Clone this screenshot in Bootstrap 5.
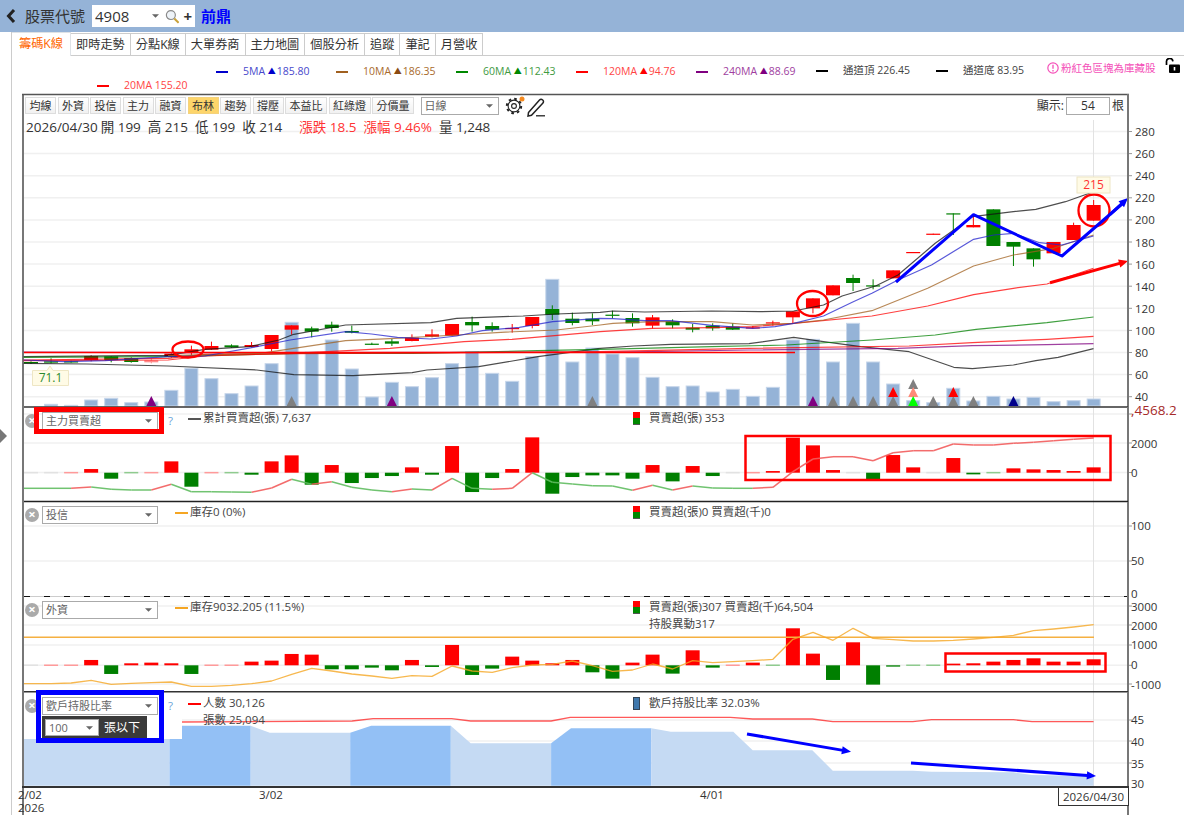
<!DOCTYPE html>
<html lang="zh-Hant">
<head>
    <meta charset="UTF-8">
    <meta name="viewport" content="width=device-width, initial-scale=1.0">
    <title>籌碼K線</title>
    <link href="https://cdn.jsdelivr.net/npm/bootstrap@5.3.0/dist/css/bootstrap.min.css" rel="stylesheet">
    <style>
        html, body {
            height: 815px;
            overflow: hidden;
        }
        body {
            background: #fff;
            color: #333;
            font-family: "Open Sans", "Noto Sans CJK TC", sans-serif;
            font-size: 12px;
            position: relative;
        }
        svg text {
            font-family: "Open Sans", "Noto Sans CJK TC", sans-serif;
        }
        .top-bar {
            height: 32px;
            background: #95b3d7;
            padding-left: 6px;
        }
        .top-label {
            font-size: 15px;
            margin-left: 9px;
            width: 67px;
        }
        .code-box {
            width: 103px;
            height: 22px;
            background: #fff;
            padding-right: 3px;
        }
        .code-box .code-select {
            width: 70px;
            height: 22px;
            border: 0;
            font-size: 15px;
            padding: 0 12px 0 3px;
            background-position: right 2px center;
            color: #333;
        }
        .code-plus {
            font-size: 15px;
            font-weight: 700;
            line-height: 1;
        }
        .stock-name {
            color: #00f;
            font-size: 15px;
            font-weight: 600;
            margin-left: 6px;
        }
        .side-handle {
            position: absolute;
            left: 0;
            top: 429px;
            border-left: 7px solid #777;
            border-top: 7px solid transparent;
            border-bottom: 7px solid transparent;
        }
        .page-body {
            margin-left: 11px;
            height: 783px;
            border-left: 1px solid #ccc;
        }
        .tab-row {
            height: 24px;
            padding-top: 1px;
            border-bottom: 1px solid #ccc;
            --bs-nav-tabs-border-color: #ccc;
            --bs-nav-tabs-border-radius: 0;
            --bs-nav-tabs-border-width: 1px;
        }
        .tab-row .nav-link {
            height: 23px;
            padding: 2px 5px 0;
            font-size: 12.2px;
            line-height: 18px;
            color: #333;
            border: 1px solid #ccc;
            border-left-width: 0;
            border-bottom: 0;
            margin: 0;
            white-space: nowrap;
        }
        .tab-row .nav-link.active {
            height: 24px;
            margin-top: -1px;
            color: #f60;
            padding: 2px 7px 0;
            border-left-width: 0;
        }
        .ma-wrap {
            height: 38px;
            padding-top: 7px;
        }
        .ma-row {
            height: 15px;
            font-size: 10.5px;
            line-height: 15px;
        }
        .ma-first {
            padding-left: 204px;
        }
        .ma-second {
            padding-left: 85px;
        }
        .ma-item {
            width: 120px;
            flex: none;
            white-space: nowrap;
        }
        .ma-up {
            font-size: 8px;
            margin-right: 1px;
            vertical-align: 1px;
        }
        .ma-dash {
            display: inline-block;
            width: 12px;
            height: 2px;
            margin-right: 15px;
            vertical-align: middle;
        }
        .stock-note {
            width: 108px;
            flex: none;
            margin-top: -5px;
            color: #f44fb8;
            white-space: nowrap;
            font-size: 10.5px;
        }
        .lock-icon {
            margin-top: -5px;
            margin-left: 10px;
        }
        .chart-frame {
            margin-left: 10px;
            width: 1107px;
            position: relative;
            box-shadow: inset 2px 0 #777, inset -2px 0 #777;
        }
        .chart-panel {
            position: relative;
        }
        .panel-price { height: 313px; }
        .panel-sub { height: 95px; }
        .panel-svg {
            position: absolute;
            left: 0;
            top: 0;
            overflow: visible;
        }
        .tool-row {
            position: relative;
            padding: 3px 5px 0 3px;
            height: 20px;
            gap: 1.5px;
        }
        .tool-btn {
            height: 17px;
            font-size: 11px;
            line-height: 15px;
            padding: 0 3.5px;
            border: 1px solid #ddd;
            border-radius: 0;
            color: #333;
            background: linear-gradient(#fff, #f1f1f1);
            white-space: nowrap;
            --bs-btn-hover-color: #333;
        }
        .tool-btn.on {
            background: #fdd56b;
            border-color: #f4d27c;
        }
        .pick {
            height: 18px;
            font-size: 11px;
            line-height: 16px;
            padding: 0 14px 0 3px;
            border: 1px solid #aaa;
            border-radius: 0;
            color: #666;
            background-size: 7px 4px;
            background-position: right 5px center;
            background-image: url("data:image/svg+xml,%3csvg xmlns='http://www.w3.org/2000/svg' viewBox='0 0 8 4'%3e%3cpath fill='%23666' d='M0 0h8L4 4z'/%3e%3c/svg%3e");
            box-shadow: none;
        }
        .pick-range {
            width: 78px;
            margin-left: 5px;
            flex: none;
        }
        .tool-gear {
            margin-left: 5px;
            margin-top: -1px;
        }
        .show-count {
            font-size: 12px;
        }
        .count-box {
            width: 44px;
            height: 18px;
            margin: 0 2px 0 2px;
            border: 1px solid #aaa;
            text-align: center;
            font-size: 12px;
            line-height: 16px;
        }
        .info-row {
            position: relative;
            font-size: 13.5px;
            line-height: 18px;
            padding-left: 4px;
            margin-top: 4px;
            white-space: nowrap;
            color: #333;
        }
        .info-row span {
            margin-right: 3px;
        }
        .info-row .up {
            color: #f33;
        }
        .info-row .gap-left {
            margin-left: 14px;
        }
        .panel-head {
            position: relative;
            padding-left: 3px;
            font-size: 11.5px;
            color: #444;
        }
        .head-left {
            width: 608px;
            flex: none;
        }
        .close-dot {
            width: 14px;
            height: 14px;
            border-radius: 50%;
            background: #aaa;
            color: #fff;
            font-size: 13px;
            line-height: 13px;
            font-weight: 700;
            text-align: center;
            margin-top: 2px;
            margin-right: 3px;
            flex: none;
        }
        .pick-panel {
            width: 116px;
            flex: none;
        }
        .help-mark {
            width: 15px;
            flex: none;
            text-align: right;
            color: #6ba4d8;
            line-height: 18px;
        }
        .head-legend {
            margin-top: -3px;
            line-height: 17px;
            white-space: nowrap;
        }
        .legend-far {
            margin-left: 15px;
        }
        .legend-near {
            margin-left: 2px;
        }
        .leg-dash {
            display: inline-block;
            width: 13px;
            height: 1.5px;
            margin-right: 2px;
            vertical-align: middle;
        }
        .leg-blank {
            padding-left: 15px;
        }
        .swatch-pair {
            width: 7px;
            height: 13px;
            border: 1px solid #555;
            border-width: 0 0 1px;
            background: linear-gradient(#f00 50%, #080 50%);
            margin: 0 9px 0 0;
            flex: none;
        }
        .swatch-blue {
            background: #3f78ad;
            border: 1px solid #345;
        }
        .retail-tool {
            width: 105px;
            height: 23px;
            margin-top: 1px;
            background: #3a3a3a;
            color: #fff;
            padding-left: 3px;
            font-size: 12px;
        }
        .pick-small {
            width: 54px;
            height: 17px;
            background-color: #fff;
            margin-right: 5px;
            flex: none;
        }
        .mark-box {
            position: absolute;
            border: 5px solid #f00;
            pointer-events: none;
        }
        .mark-main {
            left: 12px;
            top: 0;
            width: 130px;
            height: 27px;
        }
        .mark-retail {
            left: 14px;
            top: -2px;
            width: 128px;
            height: 53px;
            border-color: #00f;
        }
        .date-axis {
            position: relative;
            height: 28px;
        }
    </style>
</head>
<body>
    <div class="top-bar d-flex align-items-center">
        <svg width="10" height="14" viewBox="0 0 10 14"><path d="M8 1 2.5 7 8 13" fill="none" stroke="#222" stroke-width="3"/></svg>
        <div class="top-label">股票代號</div>
        <div class="code-box d-flex align-items-center">
            <select class="form-select code-select pick"><option>4908</option></select>
            <svg width="15" height="15" viewBox="0 0 15 15" class="ms-1"><circle cx="6" cy="6" r="4.6" fill="#eef3f8" stroke="#8a8a8a" stroke-width="1.2"/><path d="M9.5 9.5 14 14" stroke="#c9a23a" stroke-width="2.2"/></svg>
            <span class="code-plus ms-1">+</span>
        </div>
        <div class="stock-name">前鼎</div>
    </div>

    <div class="side-handle"></div>

    <div class="page-body">
        <ul class="nav nav-tabs tab-row flex-nowrap">
            <li class="nav-item"><a class="nav-link active" href="#">籌碼K線</a></li>
            <li class="nav-item"><a class="nav-link" href="#">即時走勢</a></li>
            <li class="nav-item"><a class="nav-link" href="#">分點K線</a></li>
            <li class="nav-item"><a class="nav-link" href="#">大單券商</a></li>
            <li class="nav-item"><a class="nav-link" href="#">主力地圖</a></li>
            <li class="nav-item"><a class="nav-link" href="#">個股分析</a></li>
            <li class="nav-item"><a class="nav-link" href="#">追蹤</a></li>
            <li class="nav-item"><a class="nav-link" href="#">筆記</a></li>
            <li class="nav-item"><a class="nav-link" href="#">月營收</a></li>
        </ul>

        <div class="ma-wrap">
            <div class="ma-row ma-first d-flex">
                <div class="ma-item" style="color:#4848cc"><i class="ma-dash" style="background:#00c"></i>5MA <span class="ma-up" style="color:#00c">▲</span>185.80</div>
                <div class="ma-item" style="color:#a86a2c"><i class="ma-dash" style="background:#a0601f"></i>10MA <span class="ma-up" style="color:#8a4b12">▲</span>186.35</div>
                <div class="ma-item" style="color:#3f9a3f"><i class="ma-dash" style="background:#080"></i>60MA <span class="ma-up" style="color:#080">▲</span>112.43</div>
                <div class="ma-item" style="color:#f44"><i class="ma-dash" style="background:#f00"></i>120MA <span class="ma-up" style="color:#f00">▲</span>94.76</div>
                <div class="ma-item" style="color:#a03ea0"><i class="ma-dash" style="background:#800080"></i>240MA <span class="ma-up" style="color:#800080">▲</span>88.69</div>
                <div class="ma-item" style="color:#444"><i class="ma-dash" style="background:#000"></i>通道頂 226.45</div>
                <div class="ma-item" style="color:#444;width:111px"><i class="ma-dash" style="background:#000"></i>通道底 83.95</div>
                <div class="stock-note d-flex align-items-center">
                    <svg width="12" height="12" viewBox="0 0 13 13" class="flex-shrink-0" style="margin-right:2px"><circle cx="6.5" cy="6.5" r="5.6" fill="none" stroke="#f44fb8" stroke-width="1.3"/><path d="M6.5 3v4.4M6.5 8.8v1.4" stroke="#f44fb8" stroke-width="1.4"/></svg>
                    粉紅色區塊為庫藏股
                </div>
                <svg class="lock-icon" width="15" height="15" viewBox="0 0 15 15"><path d="M1.5 7V4a3.2 3.2 0 0 1 6.4-.6" fill="none" stroke="#000" stroke-width="1.7"/><rect x="4" y="6.5" width="11" height="8.5" rx="1" fill="#000"/><rect x="8.7" y="9" width="1.6" height="3.5" fill="#fff"/></svg>
            </div>
            <div class="ma-row ma-second d-flex">
                <div class="ma-item" style="color:#f44;width:auto"><i class="ma-dash" style="background:#f00"></i>20MA 155.20</div>
            </div>
        </div>

        <div class="chart-frame">
            <div class="chart-panel panel-price">
                <svg class="panel-svg" id="svgPrice" width="1162" height="313" viewBox="22 94 1162 313"></svg>
                <div class="tool-row d-flex align-items-start">
                    <button class="btn tool-btn">均線</button>
                    <button class="btn tool-btn">外資</button>
                    <button class="btn tool-btn">投信</button>
                    <button class="btn tool-btn">主力</button>
                    <button class="btn tool-btn">融資</button>
                    <button class="btn tool-btn on">布林</button>
                    <button class="btn tool-btn">趨勢</button>
                    <button class="btn tool-btn">撐壓</button>
                    <button class="btn tool-btn">本益比</button>
                    <button class="btn tool-btn">紅綠燈</button>
                    <button class="btn tool-btn">分價量</button>
                    <select class="form-select pick pick-range"><option>日線</option></select>
                    <svg class="tool-gear flex-shrink-0" width="20" height="20" viewBox="0 0 20 20">
                        <circle cx="9" cy="10" r="5.9" fill="none" stroke="#222" stroke-width="1.1"/>
                        <circle cx="9" cy="10" r="7.2" fill="none" stroke="#222" stroke-width="2" stroke-dasharray="2.6 3.05"/>
                        <circle cx="9" cy="10" r="2.4" fill="none" stroke="#222" stroke-width="1.1"/>
                        <circle cx="17" cy="3" r="2.5" fill="#f58a1f"/>
                    </svg>
                    <svg class="flex-shrink-0" width="19" height="20" viewBox="0 0 19 20"><path d="M1.5 15.5 12.5 3Q14 1.5 15.7 3T15.5 6.5L4.5 18.3 1 19Z" fill="none" stroke="#222" stroke-width="1.5"/><path d="M9 18.8H18" stroke="#222" stroke-width="1.3"/></svg>
                    <div class="show-count d-flex align-items-center ms-auto">顯示:<div class="count-box">54</div>根</div>
                </div>
                <div class="info-row">
                    <span>2026/04/30</span><span>開 199</span><span class="ms-1">高 215</span><span class="ms-1">低 199</span><span class="ms-1">收 214</span><span class="up gap-left">漲跌 18.5</span><span class="up ms-1">漲幅 9.46%</span><span class="ms-1">量 1,248</span>
                </div>
            </div>

            <div class="chart-panel panel-sub">
                <svg class="panel-svg" id="svgMain" width="1162" height="95" viewBox="22 407 1162 95"></svg>
                <div class="panel-head d-flex" style="padding-top:5px">
                    <div class="head-left d-flex">
                        <div class="close-dot">×</div>
                        <select class="form-select pick pick-panel"><option>主力買賣超</option></select>
                        <div class="help-mark">?</div>
                        <div class="head-legend legend-far"><i class="leg-dash" style="background:#555"></i>累計買賣超(張) 7,637</div>
                    </div>
                    <div class="swatch-pair"></div>
                    <div class="head-legend">買賣超(張) 353</div>
                </div>
                <div class="mark-box mark-main"></div>
            </div>

            <div class="chart-panel panel-sub">
                <svg class="panel-svg" id="svgTrust" width="1162" height="95" viewBox="22 502 1162 95"></svg>
                <div class="panel-head d-flex" style="padding-top:4px">
                    <div class="head-left d-flex">
                        <div class="close-dot">×</div>
                        <select class="form-select pick pick-panel"><option>投信</option></select>
                        <div class="help-mark"></div>
                        <div class="head-legend legend-near"><i class="leg-dash" style="background:#f5a623"></i>庫存0 (0%)</div>
                    </div>
                    <div class="swatch-pair"></div>
                    <div class="head-legend">買賣超(張)0 買賣超(千)0</div>
                </div>
            </div>

            <div class="chart-panel panel-sub">
                <svg class="panel-svg" id="svgForeign" width="1162" height="95" viewBox="22 597 1162 95"></svg>
                <div class="panel-head d-flex" style="padding-top:4px">
                    <div class="head-left d-flex">
                        <div class="close-dot">×</div>
                        <select class="form-select pick pick-panel"><option>外資</option></select>
                        <div class="help-mark"></div>
                        <div class="head-legend legend-near"><i class="leg-dash" style="background:#f5a623"></i>庫存9032.205 (11.5%)</div>
                    </div>
                    <div class="swatch-pair"></div>
                    <div class="head-legend">買賣超(張)307 買賣超(千)64,504<br>持股異動317</div>
                </div>
            </div>

            <div class="chart-panel panel-sub">
                <svg class="panel-svg" id="svgRetail" width="1162" height="95" viewBox="22 692 1162 95"></svg>
                <div class="panel-head d-flex" style="padding-top:5px">
                    <div class="head-left d-flex">
                        <div class="close-dot">×</div>
                        <div class="d-flex flex-column">
                            <select class="form-select pick pick-panel"><option>歡戶持股比率</option></select>
                            <div class="retail-tool d-flex align-items-center">
                                <select class="form-select pick pick-small"><option>100</option></select>
                                張以下
                            </div>
                        </div>
                        <div class="help-mark">?</div>
                        <div class="head-legend legend-far"><i class="leg-dash" style="background:#f00"></i>人數 30,126<br><span class="leg-blank">張數 25,094</span></div>
                    </div>
                    <div class="swatch-pair swatch-blue"></div>
                    <div class="head-legend">歡戶持股比率 32.03%</div>
                </div>
                <div class="mark-box mark-retail"></div>
            </div>

            <div class="date-axis">
                <svg class="panel-svg" id="svgDates" width="1162" height="28" viewBox="22 787 1162 28"></svg>
            </div>
        </div>
    </div>

    <script src="https://cdn.jsdelivr.net/npm/bootstrap@5.3.0/dist/js/bootstrap.bundle.min.js"></script>
    <script>
        const RED = '#f00', GREEN = '#007f00';
        const barX = i => 31 + 20.05 * i;
        // crop coordinates -> page coordinates
        const lx = v => 20 + v / 2.703;
        const ly = v => 140 + v / 3;
        const rx = v => 600 + v / 2.685;
        const ry = v => 180 + v / 3;

        const gridLine = y => `<path d="M24 ${y}H1128" stroke="#f0f0f0" stroke-width="1.5"/><path d="M1128 ${y}h4" stroke="#999"/>`;
        const axisText = (x, y, t) => `<text x="${x}" y="${y + 4.5}" font-size="11.5" fill="#333">${t}</text>`;
        const vLine = (y1, y2) => `<path d="M1093.5 ${y1}V${y2}" stroke="#e2e2e2"/>`;
        const rightEdge = (y1, y2) => `<path d="M1128 ${y1}V${y2}" stroke="#777" stroke-width="2"/>`;
        const poly = (pts, color, w, op) => `<polyline points="${pts.map(p => p[0].toFixed(1) + ',' + p[1].toFixed(1)).join(' ')}" fill="none" stroke="${color}" stroke-width="${w}" stroke-opacity="${op || 1}" stroke-linejoin="round"/>`;
        const leftPts = a => a.map(p => [lx(p[0]), ly(p[1])]);
        const rightPts = a => a.map(p => [rx(p[0]), ry(p[1])]);

        function arrow(x1, y1, x2, y2, color, w) {
            const a = Math.atan2(y2 - y1, x2 - x1), len = 10, spread = 0.42;
            const p1 = [x2 - len * Math.cos(a - spread), y2 - len * Math.sin(a - spread)];
            const p2 = [x2 - len * Math.cos(a + spread), y2 - len * Math.sin(a + spread)];
            return `<line x1="${x1}" y1="${y1}" x2="${x2 - 5 * Math.cos(a)}" y2="${y2 - 5 * Math.sin(a)}" stroke="${color}" stroke-width="${w}"/><polygon points="${x2},${y2} ${p1} ${p2}" fill="${color}"/>`;
        }

        // price panel ----------------------------------------------------
        const volLeft = [0,793,796,780,775,788,786,751,685,716,761,738,671,547,636,600,687,771,727,740,713,671,635,700,724,650,418,666,624];
        const volRight = [522,533,592,620,618,636,628,649,622,480,478,546,430,546,612,662,668,625,663,649,657,652,665,662,657];

        // [colour, bodyTop, bodyBottom, wickTop, wickBottom]
        const candleLeft = [
            ['g',666,670,664,672],['g',664,668,655,670],['g',664,667,662,668],['d',648,660,646,664],['g',649,660,648,667],
            ['g',654,666,652,668],['p',661,667,655,670],['d',641,651,640,653],['r',628,636,617,645],['r',618,629,605,630],
            ['g',616,622,613,623],['r',615,621,606,622],['r',585,627,585,634],['r',556,569,556,584],['g',565,575,560,592],
            ['g',554,564,545,575],['g',573,578,557,580],['g',611,613,608,615],['g',604,611,597,618],['r',593,603,583,604],
            ['r',583,590,568,592],['r',552,587,552,587],['g',546,556,530,575],['g',558,569,547,575],['r',564,567,552,578],
            ['r',531,558,531,565],['g',507,524,496,540],['g',536,549,518,556],['g',536,544,520,555]
        ];
        const candleRight = [
            ['g',404,406,392,415],['g',414,430,400,440],['r',412,437,405,445],['g',424,436,418,445],['g',443,449,432,457],
            ['g',437,445,430,452],['g',440,449,430,450],['r',442,444,438,445],['r',427,429,422,437],['r',394,412,394,430],
            ['r',355,385,355,400],['r',316,346,316,346],['g',294,309,284,333],['g',316,318,298,328],['r',271,295,271,295],
            ['r',216,219,216,219],['r',161,164,161,164],['g',100,103,100,165],['r',135,142,105,142],['g',88,198,88,198],
            ['g',186,200,186,258],['g',205,238,205,260],['r',186,220,186,220],['r',135,180,128,180],['r',75,122,60,122]
        ];
        const candleColor = { r: RED, g: GREEN, d: '#c40000', p: '#ff8c8c' };

        // [bar index, colour, tip y]
        const triangles = [
            [6,'#800080',405],[13,'#808080',405],[18,'#800080',405],[28,'#808080',405],
            [39,'#800080',405],[40,'#808080',405],[41,'#808080',405],[42,'#808080',405],[43,'#808080',405],[43,'#f00',396],
            [44,'#808080',388],[44,'#ff8a78',396],[44,'#0f0',405],[45,'#808080',405],[46,'#808080',405],[46,'#f00',396],
            [47,'#808080',405],[49,'#00008b',405]
        ];

        function drawPrice() {
            let s = '';
            const labels = [280,260,240,220,200,180,160,140,120,100,80,60,40];
            labels.forEach((v, k) => {
                const y = 131.5 + k * 22.1;
                s += gridLine(y) + axisText(1135, y, v);
            });
            s += vLine(120, 407);
            s += '<path d="M22 94.5H1129" stroke="#555" stroke-width="1.5"/>';

            volLeft.concat(volRight).forEach((top, i) => {
                if (!top) return;
                const y = i < 29 ? ly(top) : ry(top);
                s += `<rect x="${barX(i) - 6.5}" y="${y}" width="13" height="${406 - y}" fill="#95b3d7" stroke="#c6d6ea" stroke-width="1"/>`;
            });
            triangles.forEach(t => {
                const x = barX(t[0]);
                s += `<polygon points="${x - 5},${t[2] + 1} ${x + 5},${t[2] + 1} ${x},${t[2] - 9}" fill="${t[1]}"/>`;
            });

            const drawCandle = (c, i, conv) => {
                const x = barX(i), col = candleColor[c[0]];
                s += `<path d="M${x} ${conv(c[3])}V${conv(c[4])}" stroke="${col}"/>`;
                s += `<rect x="${x - 7}" y="${conv(c[1])}" width="14" height="${Math.max(1.2, conv(c[2]) - conv(c[1]))}" fill="${col}"/>`;
            };
            candleLeft.forEach((c, i) => drawCandle(c, i, ly));
            candleRight.forEach((c, i) => drawCandle(c, i + 29, ry));

            // channel and moving averages
            const lines = [
                ['#111', [[10,650],[400,646],[500,628],[620,620],[700,600],[740,583],[880,555],[1110,548],[1180,535],[1360,528],[1450,522],[1568,517]], [[35,393],[120,396],[300,393],[430,395],[520,393],[600,375],[650,348],[740,318],[800,285],[900,190],[1000,110],[1110,95],[1170,88],[1250,65],[1325,35]]],
                ['#111', [[10,670],[180,672],[400,678],[640,690],[740,704],[900,707],[1060,698],[1100,690],[1240,680],[1400,650],[1568,625]], [[90,498],[190,493],[400,491],[520,472],[600,485],[700,500],[830,515],[950,562],[1000,566],[1110,555],[1170,542],[1230,532],[1325,506]]],
                ['#008000', [[10,652],[400,650],[750,640],[1060,640],[1400,632],[1568,628]], [[300,500],[500,495],[730,480],[900,465],[1010,448],[1200,428],[1325,411]]],
                ['#800080', [[10,636],[400,638],[1568,637]], [[400,510],[800,505],[1000,497],[1200,494],[1325,491]]],
                ['#f00', [[10,660],[400,655],[500,643],[1568,635]], [[400,505],[830,498],[1000,488],[1200,478],[1325,469]]],
                ['#f00', [[10,662],[400,660],[500,648],[740,640],[1000,625],[1200,605],[1330,598],[1568,575]], [[140,445],[300,443],[410,440],[520,430],[730,408],[880,378],[1003,344],[1110,325],[1200,312],[1325,265]]],
                ['#a0601f', [[400,647],[650,640],[740,625],[880,602],[1000,596],[1180,585],[1300,577],[1450,570],[1568,555]], [[35,430],[140,425],[300,425],[410,435],[520,430],[600,420],[730,392],[880,325],[1003,258],[1110,225],[1218,205],[1325,165]]],
                ['#2222cc', [[10,660],[120,665],[230,662],[400,650],[500,648],[640,620],[730,600],[880,575],[950,582],[1020,592],[1110,597],[1180,588],[1250,572],[1350,562],[1440,545],[1568,535]], [[35,416],[120,422],[190,422],[300,436],[410,445],[470,440],[520,430],[600,408],[680,365],[730,340],[800,300],[890,255],[1003,178],[1057,165],[1110,160],[1180,188],[1240,195],[1325,168]]]
            ];
            lines.forEach(l => {
                s += poly(leftPts(l[1]).concat(rightPts(l[2])), l[0], 1.2, 0.75);
            });

            // hand-drawn marks
            s += '<path d="M24 352.5H795" stroke="#f00" stroke-width="1.3"/>';
            s += '<ellipse cx="188" cy="349.5" rx="15.5" ry="8" fill="none" stroke="#f00" stroke-width="2.3"/>';
            s += '<ellipse cx="812.5" cy="303.5" rx="15.5" ry="12.5" fill="none" stroke="#f00" stroke-width="2.3"/>';
            s += '<ellipse cx="1094" cy="210.5" rx="15.5" ry="16" fill="none" stroke="#f00" stroke-width="2.3"/>';
            s += poly([[896,282],[973.5,214.7],[1062,256],[1122,204]], '#00f', 3);
            s += arrow(1110, 214.5, 1128, 198, '#00f', 3);
            s += arrow(1050, 282.7, 1128, 261, '#f00', 3);

            // value flags
            s += '<rect x="1077" y="177" width="33" height="16" fill="#fffbe6" stroke="#eee6c4"/><text x="1093.5" y="189" font-size="12" fill="#f33" text-anchor="middle">215</text>';
            s += '<path d="M32.5 370.5H47L50 366 53 370.5H68.5V385.5H32.5Z" fill="#fffbe6" stroke="#eee6c4"/><text x="50.5" y="382" font-size="12" fill="#2c8a2c" text-anchor="middle">71.1</text>';
            s += rightEdge(94, 407);
            document.getElementById('svgPrice').innerHTML = s;
        }

        // bars for the sub panels: signed height in crop units, p = pale thin dash ------------------
        function flowBars(list, zero) {
            let s = '';
            list.forEach((v, i) => {
                const pale = typeof v === 'string';
                const h = parseFloat(v) / 3;
                const x = barX(i) - 7;
                if (pale) {
                    const col = h > 0 ? '#ff9a9a' : (h < 0 ? '#8fcb8f' : '#e2e2e2');
                    s += `<rect x="${x}" y="${zero - 0.8}" width="14" height="1.5" fill="${col}"/>`;
                } else if (h >= 0) {
                    s += `<rect x="${x}" y="${zero - h}" width="14" height="${h}" fill="${RED}"/>`;
                } else {
                    s += `<rect x="${x}" y="${zero}" width="14" height="${-h}" fill="${GREEN}"/>`;
                }
            });
            return s;
        }

        function drawMain() {
            let s = '';
            [414, 443, 472.5].forEach(y => { s += gridLine(y); });
            s += vLine(407, 502);
            s += '<path d="M24 407H1128" stroke="#333" stroke-width="1.5"/>';
            s += '<text x="1131" y="415" font-size="13.5" fill="#a52a2a">,4568.2</text>';
            s += axisText(1131, 443, 2000) + axisText(1131, 472.5, 0);
            const bars = ['0p','0p','2p',11,-18,'-3p','2p',34,-42,'2p','-2p',-6,34,52,-36,23,-31,-16,-10,16,-6,80,-58,-16,11,106,-63,-13,-8,
                -8,-18,23,-26,20,-10,'0p','2p',5,105,82,8,'0p',-21,53,16,'0p',44,-5,'-5p',13,10,8,5,16];
            s += flowBars(bars, 472.7);
            const total = [565,565,565,561,568,570,570,553,575,575,576,577,564,538,553,545,562,570,575,567,570,535,565,568,565,518,547,552,557].map(v => 300 + v / 3)
                .concat([918,931,916,930,918,924,925,925,922,875,837,830,830,842,818,812,812,792,795,795,790,787,782,778,774].map(ry));
            let prev = [24, total[0]];
            total.forEach((y, i) => {
                const p = [barX(i), y];
                s += poly([prev, p], y < prev[1] - 0.2 || i > 36 ? '#f25c5c' : '#61bd61', 1.5, 0.9);
                prev = p;
            });
            s += `<rect x="745.5" y="436" width="365" height="44" fill="none" stroke="#f00" stroke-width="2.5"/>`;
            s += rightEdge(407, 502);
            document.getElementById('svgMain').innerHTML = s;
        }

        function drawTrust() {
            let s = '';
            s += gridLine(526) + gridLine(561);
            s += vLine(502, 597);
            s += '<path d="M24 501.5H1128" stroke="#222" stroke-width="1.5"/>';
            s += '<path d="M24 596.5H1128" stroke="#ccc" stroke-width="1"/>';
            s += '<path d="M24 596.5H1128" stroke="#111" stroke-width="1" stroke-dasharray="6 14"/>';
            s += axisText(1131, 525, 100) + axisText(1131, 560, 50) + axisText(1131, 593.5, 0);
            s += rightEdge(502, 597);
            document.getElementById('svgTrust').innerHTML = s;
        }

        function drawForeign() {
            let s = '';
            [606, 625, 645, 665.3, 684].forEach(y => { s += gridLine(y); });
            s += vLine(597, 692);
            const labels = [[606,3000],[625,2000],[644.6,1000],[664.7,0],[684,-1000]];
            labels.forEach(l => { s += axisText(1131, l[0], l[1]); });
            const bars = ['0p','3p','3p',16,-26,6,8,6,-26,'3p','3p',11,14,34,32,-12,-12,-7,-15,16,-5,61,-29,-10,26,14,6,16,-21,
                -40,8,32,-25,45,-7,'3p',8,'-4p',111,35,-44,69,-58,-4,'-4p','-4p',5,6,11,16,21,11,11,18];
            s += flowBars(bars, 665.3);
            s += '<path d="M24 637.3H1094" stroke="#f5b041" stroke-width="1.5"/>';
            const stock = [266,266,264,256,268,265,263,261,274,274,271,266,258,238,220,228,237,243,250,242,244,213,228,232,218,210,208,198,212,
                229,225,207,222,197,203,200,197,193,133,112,136,100,130,134,138,138,136,132,127,121,107,102,96,89];
            s += poly([[24, 595 + 266 / 3]].concat(stock.map((v, i) => [barX(i), 595 + v / 3])), '#f5a623', 1.3, 0.8);
            s += '<rect x="945.5" y="653.5" width="160" height="18" fill="none" stroke="#f00" stroke-width="2.5"/>';
            s += rightEdge(597, 692);
            document.getElementById('svgForeign').innerHTML = s;
        }

        function drawRetail() {
            let s = '';
            const x5 = v => v / 2.613;
            const x6 = v => 600 + v / 2.685;
            const y5 = v => 595 + v / 3;
            const base = y5(572);
            const area = (pts, col) => {
                const a = pts.map(p => `${p[0].toFixed(1)},${y5(p[1]).toFixed(1)}`).join(' ');
                return `<polygon points="${pts[0][0].toFixed(1)},${base} ${a} ${pts[pts.length - 1][0].toFixed(1)},${base}" fill="${col}"/>`;
            };
            const LIGHT = '#c5daf3', DARK = '#93c0f5';
            [720, 741, 763].forEach(y => { s += gridLine(y); });
            s += vLine(692, 787);
            s += '<path d="M24 691.8H1128" stroke="#333" stroke-width="1.5"/>';
            s += area([[24,432],[x5(443),432]], LIGHT);
            s += area([[x5(443),392],[x5(655),392]], DARK);
            s += area([[x5(655),392],[x5(705),413],[x5(915),413]], LIGHT);
            s += area([[x5(915),413],[x5(970),392],[x5(1178),392]], DARK);
            s += area([[x5(1178),392],[x5(1230),445],[x5(1440),445]], LIGHT);
            s += area([[x5(1440),445],[x5(1492),400],[x6(138),400]], DARK);
            s += area([[x6(138),400],[x6(190),410],[x6(358),410],[x6(410),466],[x6(570),466],[x6(625),527],[x6(840),527],[x6(890),530],[x6(1110),532],[x6(1160),540],[x6(1325),543]], LIGHT);

            const people = [[24,385],[x5(476),381],[x5(920),378],[x5(975),371],[x5(1180),371],[x5(1230),378],[x5(1440),378],[x5(1490),367],[x6(350),367],[x6(410),372],[x6(570),372],[x6(625),380],[x6(840),380],[x6(890),374],[x6(1110),374],[x6(1160),380],[x6(1325),380]];
            s += poly(people.map(p => [p[0], y5(p[1])]), '#f00', 1.3, 0.65);
            s += '<rect x="24" y="718" width="158" height="21" fill="#fff"/>';
            s += arrow(747, 734, 851, 751.7, '#00f', 3);
            s += arrow(911, 763, 1096, 776, '#00f', 3);
            const labels = [[719.7,45],[741,40],[763,35],[783.5,30]];
            labels.forEach(l => { s += axisText(1131, l[0], l[1]); });
            s += rightEdge(692, 787);
            document.getElementById('svgRetail').innerHTML = s;
        }

        function drawDates() {
            let s = '<path d="M22 787H1129" stroke="#333" stroke-width="2"/>';
            s += '<text x="18" y="799" font-size="11.5" fill="#333">2/02</text>';
            s += '<text x="18" y="812" font-size="11.5" fill="#333">2026</text>';
            s += '<text x="259" y="799" font-size="11.5" fill="#333">3/02</text>';
            s += '<text x="700" y="799" font-size="11.5" fill="#333">4/01</text>';
            s += '<rect x="1058.5" y="787.5" width="70" height="18" fill="#fff" stroke="#333"/>';
            s += '<text x="1093.5" y="800.5" font-size="11.5" fill="#333" text-anchor="middle">2026/04/30</text>';
            document.getElementById('svgDates').innerHTML = s;
        }

        drawPrice();
        drawMain();
        drawTrust();
        drawForeign();
        drawRetail();
        drawDates();
    </script>
</body>
</html>
